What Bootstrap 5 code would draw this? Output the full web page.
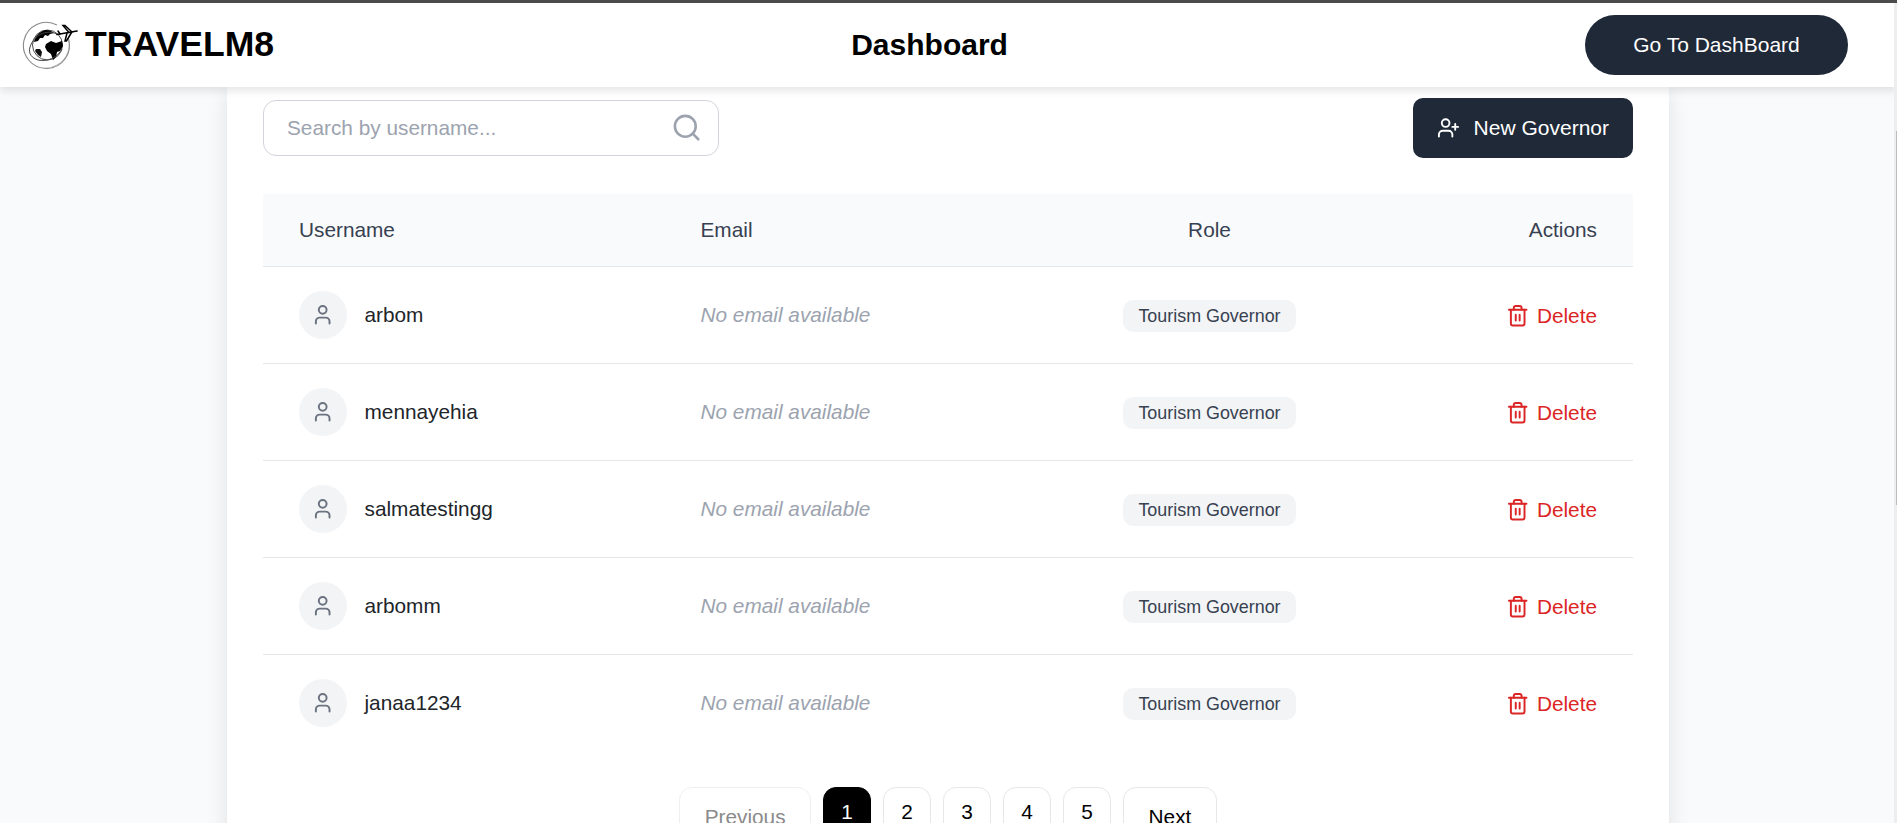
<!DOCTYPE html>
<html lang="en">
<head>
    <meta charset="UTF-8">
    <title>Dashboard - TravelM8</title>
    <link href="https://cdn.jsdelivr.net/npm/bootstrap@5.3.0/dist/css/bootstrap.min.css" rel="stylesheet">
    <style>
        html, body {
            height: 100%;
            overflow: hidden;
        }
        body {
            font-family: "Liberation Sans", Arial, sans-serif;
            font-size: 20.8px;
            background-color: #f9fafb;
            color: #000;
            border-top: 3px solid #4b4b4b;
        }
        .page-shell {
            height: 100%;
        }
        .top-nav {
            height: 84px;
            padding: 0 49px 0 22px;
            background-color: #fff;
            box-shadow: 0 4px 8px rgba(0, 0, 0, 0.1);
            position: relative;
            z-index: 2;
        }
        .brand-name {
            font-size: 35.6px;
            font-weight: 700;
            line-height: 1;
            margin-left: 7px;
        }
        .page-title {
            font-size: 30px;
            font-weight: 700;
            margin: 0;
        }
        .btn-dash {
            width: 263px;
            height: 60px;
            border: 0;
            border-radius: 30px;
            background-color: #1f2937;
            color: #fff;
            font-size: 21px;
        }
        .btn-dash:hover, .btn-new:hover {
            background-color: #1f2937;
            color: #fff;
        }
        .content-area {
            min-height: 0;
            overflow: hidden;
        }
        .gov-panel {
            width: 1442px;
            margin-left: 227px;
            padding: 11px 36px 0 36px;
            min-height: 100%;
            background-color: #fff;
            box-shadow: 0 5px 20px rgba(0, 0, 0, 0.1);
        }
        .search-wrap {
            width: 456px;
        }
        .search-input {
            height: 56px;
            padding: 0 60px 0 23px;
            font-size: 20.8px;
            border: 1px solid #d1d5db;
            border-radius: 13px;
        }
        .search-input::placeholder {
            color: #9ca3af;
        }
        .search-icon {
            position: absolute;
            top: 12px;
            right: 17px;
            color: #9ca3af;
        }
        .btn-new {
            width: 220px;
            height: 60px;
            padding: 0 24px;
            border: 0;
            border-radius: 10px;
            background-color: #1f2937;
            color: #fff;
            font-size: 21px;
            white-space: nowrap;
        }
        .btn-new svg {
            margin-right: 13.6px;
        }
        .gov-table {
            margin-top: 36px;
            margin-bottom: 0;
            table-layout: fixed;
            --bs-table-border-color: #e5e7eb;
        }
        .gov-table th {
            height: 72px;
            padding: 0 36px;
            vertical-align: middle;
            background-color: #f9fafb;
            color: #374151;
            font-weight: 400;
        }
        .gov-table td {
            height: 97px;
            padding: 0 36px;
            vertical-align: middle;
        }
        .gov-table tr:last-child td {
            border-bottom: 0;
        }
        .col-user { width: 401.5px; }
        .col-mail { width: 422px; }
        .col-role { width: 246px; }
        .user-avatar {
            width: 48px;
            height: 48px;
            background-color: #f3f4f6;
            color: #6b7280;
            margin-right: 17.5px;
        }
        .no-email {
            color: #9ca3af;
            font-style: italic;
        }
        .role-pill {
            padding: 0 15.5px;
            line-height: 32px;
            font-size: 17.9px;
            white-space: nowrap;
            background-color: #f3f4f6;
            color: #374151;
            border-radius: 10px;
            vertical-align: middle;
            margin-top: 1px;
        }
        .btn-delete {
            padding: 0;
            border: 0;
            color: #dc2626;
            font-size: 20.8px;
            vertical-align: middle;
            margin-top: -1px;
        }
        .btn-delete:hover {
            color: #dc2626;
        }
        .btn-delete svg {
            margin-right: 7px;
        }
        .pager {
            margin-top: 36px;
            gap: 12px;
        }
        .pager-btn {
            padding: 8px 0 9px;
            width: 48px;
            font-size: 20.8px;
            color: #000;
            border: 1px solid #e5e7eb;
            border-radius: 13px;
        }
        .pager-btn.is-current {
            background-color: #000;
            border-color: #000;
            color: #fff;
        }
        .pager-wide {
            padding: 13px 24.5px;
            width: auto;
        }
        .pager-off {
            color: #8a8a8a;
            border-color: #efefef;
        }
        .scroll-track {
            position: fixed;
            top: 3px;
            right: 0;
            bottom: 0;
            width: 3px;
            background-color: #eeeeee;
            z-index: 3;
        }
        .scroll-thumb {
            position: absolute;
            top: 128px;
            right: 0;
            width: 1px;
            height: 374px;
            background-color: #bdbdbd;
        }
    </style>
</head>
<body>

<div class="page-shell d-flex flex-column">
    <!-- Top bar -->
    <nav class="top-nav d-flex align-items-center justify-content-between flex-shrink-0">
        <div class="d-flex align-items-center">
            <svg width="56" height="50" viewBox="0 0 56 50" fill="none">
                <path d="M35 5A23 23 0 1 0 46.5 19" stroke="#8a8a8a" stroke-width="1.1"/>
                <path d="M46.5 19A23 23 0 0 1 30 47" stroke="#999" stroke-width="0.8"/>
                <circle cx="25.5" cy="25" r="15" fill="#fff" stroke="#333" stroke-width="0.9"/>
                <path d="M12 22c1-6 6-11 12-12 3 0 6 1 8 3l-4 1-2 2-3-1-2 3-3 0-2 3z" fill="#000"/>
                <path d="M24 24l5-3 5 2 6-2 1 5-3 5-3 1-1 5-3 3-2-6-4-3-2-4z" fill="#000"/>
                <path d="M14 29l4 0 2 3-1 5-3-2-3-4z" fill="#111"/>
                <path d="M35 14C24 9 12 15 8 27c-2 7 2 11 8 13 9 2 19-2 24-11" stroke="#444" stroke-width="1"/>
                <path d="M35 14.5l20-3.5" stroke="#000" stroke-width="1.7" stroke-linecap="round"/>
                <path d="M47 12.5l-6-7h2l7 6.500M45 13l-2 8h1.500l5-8.500M38 14l-2-3" stroke="#000" stroke-width="1.5" stroke-linecap="round"/>
            </svg>
            <span class="brand-name">TRAVELM8</span>
        </div>
        <h1 class="page-title">Dashboard</h1>
        <button type="button" class="btn btn-dash">Go To DashBoard</button>
    </nav>

    <div class="content-area flex-grow-1">
        <div class="gov-panel">
            <!-- Search + add -->
            <div class="d-flex align-items-center justify-content-between">
                <div class="search-wrap position-relative">
                    <input type="text" class="form-control search-input" placeholder="Search by username...">
                    <svg class="search-icon" width="31.2" height="31.2" viewBox="0 0 24 24" fill="none" stroke="currentColor" stroke-width="2" stroke-linecap="round" stroke-linejoin="round">
                        <circle cx="11" cy="11" r="8"/><path d="m21 21-4.3-4.3"/>
                    </svg>
                </div>
                <button type="button" class="btn btn-new d-flex align-items-center">
                    <svg width="23.7" height="23.7" viewBox="0 0 24 24" fill="none" stroke="currentColor" stroke-width="2" stroke-linecap="round" stroke-linejoin="round">
                        <path d="M16 21v-2a4 4 0 0 0-4-4H6a4 4 0 0 0-4 4v2"/><circle cx="9" cy="7" r="4"/><path d="M19 8v6M22 11h-6"/>
                    </svg>
                    <span>New Governor</span>
                </button>
            </div>

            <table class="table gov-table">
                <thead>
                    <tr>
                        <th class="col-user">Username</th>
                        <th class="col-mail">Email</th>
                        <th class="col-role text-center">Role</th>
                        <th class="text-end">Actions</th>
                    </tr>
                </thead>
                <tbody id="govRows"></tbody>
            </table>

            <div class="pager d-flex justify-content-center align-items-start">
                <button type="button" class="btn pager-btn pager-wide pager-off">Previous</button>
                <button type="button" class="btn pager-btn is-current">1</button>
                <button type="button" class="btn pager-btn">2</button>
                <button type="button" class="btn pager-btn">3</button>
                <button type="button" class="btn pager-btn">4</button>
                <button type="button" class="btn pager-btn">5</button>
                <button type="button" class="btn pager-btn pager-wide">Next</button>
            </div>
        </div>
    </div>
</div>

<div class="scroll-track"><div class="scroll-thumb"></div></div>

<script>
    // Governor rows
    const governors = ['arbom', 'mennayehia', 'salmatestingg', 'arbomm', 'janaa1234'];

    document.getElementById('govRows').innerHTML = governors.map(function(name) {
        return `<tr>
            <td>
                <div class="d-flex align-items-center">
                    <span class="user-avatar rounded-circle d-flex align-items-center justify-content-center flex-shrink-0">
                        <svg width="23.4" height="23.4" viewBox="0 0 24 24" fill="none" stroke="currentColor" stroke-width="2" stroke-linecap="round" stroke-linejoin="round">
                            <path d="M19 21v-2a4 4 0 0 0-4-4H9a4 4 0 0 0-4 4v2"/><circle cx="12" cy="7" r="4"/>
                        </svg>
                    </span>
                    <span>${name}</span>
                </div>
            </td>
            <td class="no-email">No email available</td>
            <td class="text-center"><span class="role-pill d-inline-block">Tourism Governor</span></td>
            <td class="text-end">
                <button type="button" class="btn btn-delete d-inline-flex align-items-center">
                    <svg width="23.4" height="23.4" viewBox="0 0 24 24" fill="none" stroke="currentColor" stroke-width="2" stroke-linecap="round" stroke-linejoin="round">
                        <path d="M3 6h18"/><path d="M19 6v14c0 1-1 2-2 2H7c-1 0-2-1-2-2V6"/><path d="M8 6V4c0-1 1-2 2-2h4c1 0 2 1 2 2v2"/><path d="M10 11v6M14 11v6"/>
                    </svg>
                    Delete
                </button>
            </td>
        </tr>`;
    }).join('');
</script>

<script src="https://cdn.jsdelivr.net/npm/bootstrap@5.3.0/dist/js/bootstrap.bundle.min.js"></script>
</body>
</html>
